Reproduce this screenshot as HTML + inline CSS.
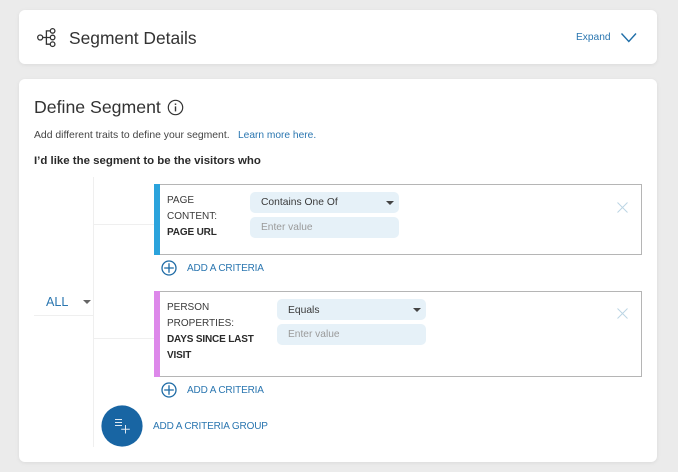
<!DOCTYPE html>
<html lang="en"><head><meta charset="utf-8"><title>Define Segment</title>
<style>
html,body{margin:0;padding:0}
body{width:678px;height:472px;background:#ebebeb;position:relative;overflow:hidden;font-family:"Liberation Sans",sans-serif;color:#333}
#w{position:absolute;left:0;top:0;width:678px;height:472px;filter:blur(.3px)}
.a{position:absolute}
.t{position:absolute;white-space:nowrap;line-height:16px}
.card{position:absolute;left:19px;width:638px;background:#fff;border-radius:6px;box-shadow:0 1px 4px rgba(0,0,0,.07)}
.l{position:absolute;background:#efefef}
.box{position:absolute;left:154px;width:487px;background:#fff;border:1px solid #b5b5b5;border-left:0;box-sizing:content-box}
.bar{position:absolute;left:154px;width:6px}
.f{position:absolute;background:#e6f1f8;border-radius:5px;height:21px}
.lab{font-size:10px;color:#3a3a3a}
.b{font-weight:700;color:#2a2a2a}
.lab.b{letter-spacing:-.16px}
.blue{color:#2a76b0}
.add{font-size:10px;letter-spacing:-.15px;color:#2a76b0}
</style></head><body><div id="w">
<div class="card" style="top:10px;height:54px"></div>
<div class="card" style="top:79px;height:383px"></div>

<svg class="a" style="left:36px;top:27px" width="22" height="22" viewBox="0 0 22 22" fill="none" stroke="#333" stroke-width="1.3">
<circle cx="4.2" cy="10.5" r="2.5"/><circle cx="16.6" cy="3.9" r="2.3"/><circle cx="16.6" cy="10.5" r="2.3"/><circle cx="16.6" cy="17.2" r="2.3"/>
<path d="M6.7 10.5H14.3M10.4 10.5V3.9H14.3M10.4 10.5V17.2H14.3"/></svg>
<div class="t" style="left:69px;top:28px;font-size:17.4px;line-height:20px">Segment Details</div>
<div class="t blue" style="left:576px;top:30px;font-size:10.2px">Expand</div>
<svg class="a" style="left:620px;top:32px" width="18" height="12" viewBox="0 0 18 12" fill="none" stroke="#1f6ea8" stroke-width="1.4"><path d="M1.5 1.5L8.8 9.5L16 1.5"/></svg>

<div class="t" style="left:34px;top:97px;font-size:17.7px;line-height:20px">Define Segment</div>
<svg class="a" style="left:167px;top:99px" width="17" height="17" viewBox="0 0 17 17" fill="none" stroke="#333" stroke-width="1.2"><circle cx="8.5" cy="8.5" r="7.2"/><path d="M8.5 7.4V12.4" stroke-width="1.4"/><path d="M8.5 4.5V5.9" stroke-width="1.5"/></svg>
<div class="t" style="left:34px;top:128px;font-size:10.4px;color:#444">Add different traits to define your segment.</div>
<div class="t blue" style="left:238px;top:128px;font-size:10.2px">Learn more here.</div>
<div class="t b" style="left:34px;top:153px;font-size:11.45px">I’d like the segment to be the visitors who</div>

<div class="l" style="left:93px;top:177px;width:1px;height:270px"></div>
<div class="l" style="left:94px;top:224px;width:60px;height:1px"></div>
<div class="l" style="left:94px;top:338px;width:60px;height:1px"></div>
<div class="l" style="left:34px;top:315px;width:59px;height:1px"></div>
<div class="t blue" style="left:46px;top:294px;font-size:12.6px">ALL</div>
<div class="a" style="left:83px;top:300px;width:0;height:0;border:4px solid transparent;border-top:4px solid #666;border-bottom:0"></div>

<div class="box" style="top:184px;height:69px"></div>
<div class="bar" style="top:184px;height:71px;background:#2ba3dc"></div>
<div class="t lab" style="left:167px;top:193px">PAGE</div>
<div class="t lab" style="left:167px;top:209px">CONTENT:</div>
<div class="t lab b" style="left:167px;top:225px">PAGE URL</div>
<div class="f" style="left:250px;top:192px;width:149px"></div>
<div class="t" style="left:261px;top:195px;font-size:10.3px;color:#3a3a3a">Contains One Of</div>
<div class="a" style="left:386px;top:201px;width:0;height:0;border:4px solid transparent;border-top:4px solid #444;border-bottom:0"></div>
<div class="f" style="left:250px;top:217px;width:149px"></div>
<div class="t" style="left:261px;top:220px;font-size:10.2px;color:#9a9a9a">Enter value</div>
<svg class="a" style="left:616px;top:201px" width="13" height="13" viewBox="0 0 13 13" stroke="#bcd5e4" stroke-width="1"><path d="M1.5 1.5L11.5 11.5M11.5 1.5L1.5 11.5"/></svg>
<svg class="a" style="left:161px;top:260px" width="16" height="16" viewBox="0 0 16 16" fill="none" stroke="#1c6aa5" stroke-width="1.3"><circle cx="8" cy="8" r="7"/><path d="M8 3.2V12.8M3.2 8H12.8"/></svg>
<div class="t add" style="left:187px;top:261px">ADD A CRITERIA</div>

<div class="box" style="top:291px;height:84px"></div>
<div class="bar" style="top:291px;height:86px;background:#dd88ea"></div>
<div class="t lab" style="left:167px;top:300px">PERSON</div>
<div class="t lab" style="left:167px;top:316px">PROPERTIES:</div>
<div class="t lab b" style="left:167px;top:332px">DAYS SINCE LAST</div>
<div class="t lab b" style="left:167px;top:348px">VISIT</div>
<div class="f" style="left:277px;top:299px;width:149px"></div>
<div class="t" style="left:288px;top:303px;font-size:10.3px;color:#3a3a3a">Equals</div>
<div class="a" style="left:413px;top:308px;width:0;height:0;border:4px solid transparent;border-top:4px solid #444;border-bottom:0"></div>
<div class="f" style="left:277px;top:324px;width:149px"></div>
<div class="t" style="left:288px;top:327px;font-size:10.2px;color:#9a9a9a">Enter value</div>
<svg class="a" style="left:616px;top:307px" width="13" height="13" viewBox="0 0 13 13" stroke="#bcd5e4" stroke-width="1"><path d="M1.5 1.5L11.5 11.5M11.5 1.5L1.5 11.5"/></svg>
<svg class="a" style="left:161px;top:382px" width="16" height="16" viewBox="0 0 16 16" fill="none" stroke="#1c6aa5" stroke-width="1.3"><circle cx="8" cy="8" r="7"/><path d="M8 3.2V12.8M3.2 8H12.8"/></svg>
<div class="t add" style="left:187px;top:383px">ADD A CRITERIA</div>

<svg class="a" style="left:101px;top:405px" width="43" height="43" viewBox="0 0 43 43"><circle cx="21" cy="21" r="20.6" fill="#1865a3"/><path d="M14 14.5H21M14 17.5H21M14 20.5H21M24.5 20V28.5M20.2 24.2H28.8" stroke="#dfeaf3" stroke-width="1" fill="none"/></svg>
<div class="t add" style="left:153px;top:419px">ADD A CRITERIA GROUP</div>
</div></body></html>
